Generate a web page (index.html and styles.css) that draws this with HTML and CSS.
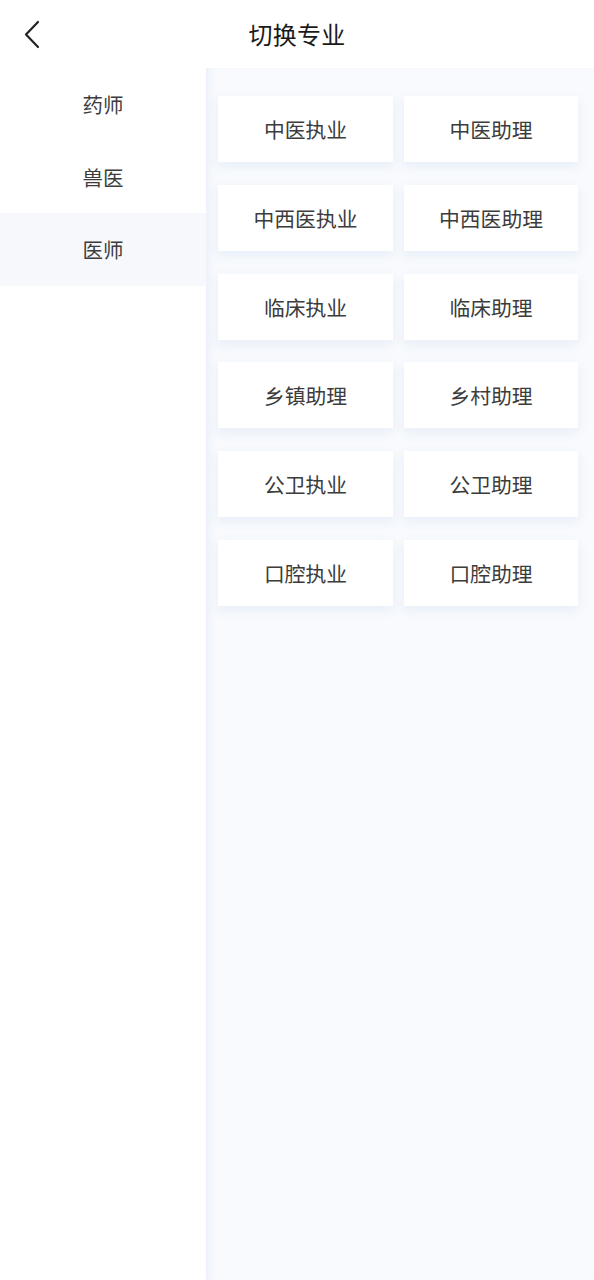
FILE: index.html
```html
<!DOCTYPE html>
<html lang="zh-CN">
<head>
<meta charset="utf-8">
<title>切换专业</title>
<link rel="stylesheet" href="styles.css">
</head>
<body>
<div class="page">
  <header class="header">
    <span class="back">
      <svg width="20" height="30" viewBox="0 0 20 30"><path d="M16 3 L4 15.5 L16 28" fill="none" stroke="#222" stroke-width="2.2" stroke-linecap="round" stroke-linejoin="round"/></svg>
    </span>
    <h1 class="title">切换专业</h1>
  </header>
  <div class="body">
    <nav class="side">
      <div class="side-item">药师</div>
      <div class="side-item">兽医</div>
      <div class="side-item active">医师</div>
    </nav>
    <main class="panel">
      <div class="grid">
        <div class="card">中医执业</div>
        <div class="card">中医助理</div>
        <div class="card">中西医执业</div>
        <div class="card">中西医助理</div>
        <div class="card">临床执业</div>
        <div class="card">临床助理</div>
        <div class="card">乡镇助理</div>
        <div class="card">乡村助理</div>
        <div class="card">公卫执业</div>
        <div class="card">公卫助理</div>
        <div class="card">口腔执业</div>
        <div class="card">口腔助理</div>
      </div>
    </main>
  </div>
</div>
</body>
</html>
```

FILE: styles.css
```css
* { box-sizing: border-box; }
html, body { margin: 0; padding: 0; background: #fff; }
body {
  font-family: "Noto Sans CJK SC", "Noto Sans", sans-serif;
  color: #3c3c3c;
}
.page {
  width: 594px;
  height: 1280px;
  display: flex;
  flex-direction: column;
  overflow: hidden;
}
.header {
  height: 68px;
  flex: none;
  position: relative;
  display: flex;
  align-items: center;
  justify-content: center;
}
.back {
  position: absolute;
  left: 22px;
  top: 19px;
  width: 20px;
  height: 30px;
  display: flex;
}
.title {
  margin: 0;
  font-size: 24px;
  font-weight: 400;
  color: #1a1a1a;
  line-height: 1;
  letter-spacing: 0.3px;
}
.body {
  flex: 1;
  display: flex;
}
.side {
  width: 206px;
  flex: none;
  background: #fff;
}
.side-item {
  height: 72.7px;
  display: flex;
  align-items: center;
  justify-content: center;
  font-size: 20.5px;
  color: #3c3c3c;
  padding-bottom: 1px;
}
.side-item.active {
  background: #f6f8fc;
}
.panel {
  flex: 1;
  background: #f8fafd;
  padding: 28px 16px 0 12px;
  box-shadow: inset 8px 0 8px -6px rgba(200, 215, 240, 0.35);
}
.grid {
  display: grid;
  grid-template-columns: 175px 174px;
  column-gap: 11px;
  row-gap: 22.8px;
}
.card {
  height: 66px;
  background: #fff;
  display: flex;
  align-items: center;
  justify-content: center;
  font-size: 20.8px;
  color: #3c3c3c;
  box-shadow: 0 4px 10px rgba(220, 230, 245, 0.6);
}
```
